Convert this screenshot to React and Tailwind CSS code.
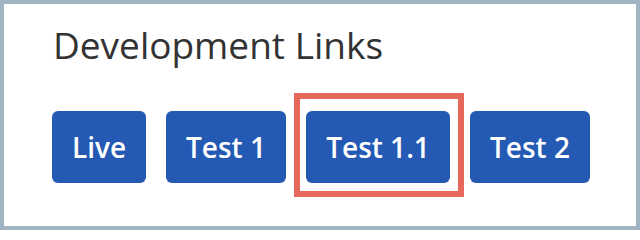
import React from "react";

export default function App() {
  const btn =
    "h-[72px] rounded-[6px] bg-[#2459b4] text-white text-[28px] font-semibold flex items-center justify-center";
  return (
    <div
      className="w-[640px] h-[230px] border-4 border-[#9fb3c0] bg-white"
      style={{ fontFamily: '"Open Sans", "Noto Sans", sans-serif' }}
    >
      <div className="pl-[48px] pt-[21px]">
        <h2 className="pl-[1px] text-[37px] leading-[40px] text-[#333333] font-normal">
          Development Links
        </h2>
        <div className="mt-[46px] flex items-center gap-[20px]">
          <button className={btn + " w-[94px]"}>Live</button>
          <button className={btn + " w-[120px]"}>Test 1</button>
          <div className="relative">
            <button className={btn + " w-[144px]"}>Test 1.1</button>
            <div className="absolute -top-[18px] -bottom-[14px] -left-[12px] -right-[14px] border-[6px] border-[#e5685a] pointer-events-none" />
          </div>
          <button className={btn + " w-[120px]"}>Test 2</button>
        </div>
      </div>
    </div>
  );
}
